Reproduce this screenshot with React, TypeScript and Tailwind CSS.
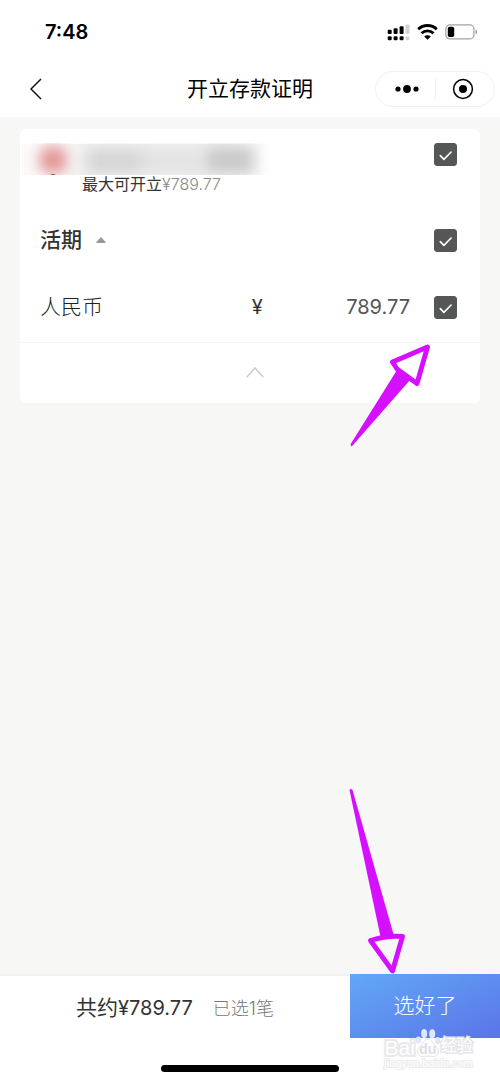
import { useState } from 'react';

function Check({ label, checked, onChange }: { label: string; checked: boolean; onChange: () => void }) {
  return (
    <label className="grid size-[23px] shrink-0 place-items-center">
      <input
        type="checkbox"
        aria-label={label}
        checked={checked}
        onChange={onChange}
        className="peer size-[23px] appearance-none rounded-[3px] border border-[#555756] bg-white [grid-area:1/1] checked:bg-[#555756]"
      />
      <svg viewBox="0 0 23 23" className="pointer-events-none invisible size-[23px] [grid-area:1/1] peer-checked:visible" fill="none" stroke="white" strokeWidth="1.6" strokeLinecap="round" strokeLinejoin="round">
        <path d="M6.300 12.600l3.600 3.800 7.200-7.400" />
      </svg>
    </label>
  );
}

function StatusIcons() {
  return (
    <div className="flex items-center gap-[7px]">
      <svg width="23" height="17" viewBox="0 0 23 17" aria-hidden="true">
        <g fill="#000">
          <rect x="0.7" y="5.7" width="4" height="4.3" rx="1" />
          <rect x="6.6" y="4.3" width="4" height="5.7" rx="1" />
          <rect x="12.6" y="2.3" width="4" height="7.7" rx="1" />
          <rect x="0.7" y="12.3" width="4" height="4" rx="1.2" />
          <rect x="6.6" y="12.3" width="4" height="4" rx="1.2" />
          <rect x="12.6" y="12.3" width="4" height="4" rx="1.2" />
        </g>
        <g fill="#d2d2d2">
          <rect x="18.5" y="0.5" width="4" height="9.5" rx="1" />
          <rect x="18.5" y="12.3" width="4" height="4" rx="1.2" />
        </g>
      </svg>
      <svg width="21" height="16" viewBox="0 0 21 16" aria-hidden="true" fill="none" stroke="#000" strokeWidth="2.9">
        <path d="M1.200 5.300a13.400 13.400 0 0 1 18.600 0" />
        <path d="M4.500 9.300a8.600 8.600 0 0 1 12 0" />
        <path d="M10.500 15.800l-3.300-3.200a4.600 4.600 0 0 1 6.600 0z" fill="#000" stroke="none" />
      </svg>
      <svg width="33" height="16" viewBox="0 0 33 16" aria-hidden="true">
        <rect x="0.9" y="0.9" width="28" height="14" rx="4" fill="none" stroke="#a3a3a3" strokeWidth="1.2" />
        <rect x="2.8" y="2.8" width="6.4" height="10.3" rx="1.8" fill="#000" />
        <path d="M30.600 5.600c2 .8 2 4 0 4.800z" fill="#8f8f8f" />
      </svg>
    </div>
  );
}

function Watermark() {
  return (
    <div aria-hidden="true" className="pointer-events-none absolute top-[54px] right-[27px] flex flex-col items-center font-['Liberation_Sans','Noto_Sans_CJK_SC',sans-serif] leading-none">
      <div className="flex items-end">
        <span className="text-[21px] text-white [-webkit-text-stroke:4px_#e8e9eb] [paint-order:stroke]">Bai</span>
        <span className="grid place-items-center">
          <svg width="26" height="30" viewBox="0 0 26 30" className="[grid-area:1/1]" fill="#dfe8fb">
            <ellipse cx="9.200" cy="5.600" rx="3" ry="4.600" />
            <ellipse cx="17.200" cy="5.800" rx="3" ry="4.600" />
            <ellipse cx="3.400" cy="12" rx="2.800" ry="3.600" />
            <ellipse cx="22.600" cy="12.600" rx="2.800" ry="3.600" />
            <path d="M13 11c4 0 5.400 5 8.400 8 3.600 3.600 2 9.500-2.800 9.500-2 0-3.600-.5-5.600-.5s-3.600.5-5.600.5c-4.800 0-6.400-5.900-2.800-9.500 3-3 4.400-8 8.400-8z" fill="#fff" stroke="#e2e3e6" />
          </svg>
          <span className="pt-3 text-[14px] font-bold text-[#dcdee1] [grid-area:1/1]">du</span>
        </span>
        <span className="pb-1 text-[16px] text-white [-webkit-text-stroke:3px_#e6e7ea] [paint-order:stroke]">经验</span>
      </div>
      <span className="text-[11px] text-white [-webkit-text-stroke:2px_#ececee] [paint-order:stroke]">jingyan.baidu.com</span>
    </div>
  );
}

export default function App() {
  const [selected, setSelected] = useState(true);
  const [expanded, setExpanded] = useState(true);
  const toggle = () => setSelected(!selected);

  return (
    <div className="flex min-h-screen flex-col bg-[#f7f7f6] font-[Inter,'Noto_Sans_CJK_SC',sans-serif] text-[#333]">
      <header className="bg-white text-black">
        <div className="flex h-[60px] items-center justify-between pt-1 pr-[22px] pl-[45px]">
          <span className="text-[20px] font-semibold">7:48</span>
          <StatusIcons />
        </div>
        <div className="grid h-[57px] grid-cols-[1fr_auto_1fr] items-center px-[5px]">
          <button type="button" aria-label="返回" className="ml-[15px] flex size-8 items-center justify-center">
            <svg width="12" height="22" viewBox="0 0 12 22" fill="none" stroke="#111" strokeWidth="1.5">
              <path d="M11 1L1 11l10 10" />
            </svg>
          </button>
          <h1 className="text-[21px]">开立存款证明</h1>
          <div className="flex h-9 w-[120px] items-center justify-self-end rounded-full border border-[#f1f1f1] pr-1">
            <button type="button" aria-label="更多" className="flex flex-1 justify-center pl-1">
              <svg width="24" height="10" viewBox="0 0 24 10">
                <circle cx="3" cy="5" r="2.600" />
                <circle cx="12" cy="5" r="3.900" />
                <circle cx="21" cy="5" r="2.600" />
              </svg>
            </button>
            <span className="h-[22px] w-px bg-[#f0f0f0]" />
            <button type="button" aria-label="关闭" className="flex flex-1 justify-center">
              <svg width="22" height="22" viewBox="0 0 22 22">
                <circle cx="11" cy="11" r="9.400" fill="none" stroke="#000" strokeWidth="1.500" />
                <circle cx="11" cy="11" r="4" />
              </svg>
            </button>
          </div>
        </div>
      </header>

      <main className="flex-1 px-5 pt-3">
        <section className="relative rounded-md bg-white">
          <div className="flex h-[77px] items-start justify-between pt-[14px] pr-[23px] pl-[2px]">
            <div>
              <div className="h-8 w-[250px] overflow-hidden">
                <svg viewBox="0 0 250 32" className="h-8 w-[250px]" aria-hidden="true">
                  <defs>
                    <filter id="soft" x="-20%" y="-100%" width="140%" height="300%">
                      <feGaussianBlur stdDeviation="7" />
                    </filter>
                    <linearGradient id="haze">
                      <stop offset="0" stopColor="#f5efef" stopOpacity="0.3" />
                      <stop offset="0.3" stopColor="#efefef" />
                      <stop offset="0.85" stopColor="#efefef" />
                      <stop offset="1" stopColor="#fff" />
                    </linearGradient>
                  </defs>
                  <rect y="1" width="250" height="31" fill="url(#haze)" />
                  <g filter="url(#soft)">
                    <circle cx="31" cy="17" r="14" fill="#e39494" />
                    <rect x="64" y="6" width="56" height="24" fill="#d6d6d6" />
                    <rect x="120" y="6" width="60" height="24" fill="#e3e3e3" />
                    <rect x="184" y="4" width="48" height="26" fill="#cacaca" />
                  </g>
                  <path d="M28 31q3 2 6 0z" fill="#a34a50" />
                </svg>
              </div>
              <p className="pl-[60px] text-[16px] leading-[18px]">
                最大可开立<span className="font-light text-[#888]">¥789.77</span>
              </p>
            </div>
            <Check label="最大可开立" checked={selected} onChange={toggle} />
          </div>

          <div className="flex h-[68px] items-center justify-between pr-[23px] pl-5">
            <button type="button" className="flex items-center gap-[14px] text-[21px] font-medium" onClick={() => setExpanded(!expanded)}>
              活期
              <svg width="10" height="6" viewBox="0 0 10 6" fill="#999">
                <path d="M5 0l4.600 5q.4 1-.6 1H1q-1 0-.6-1z" />
              </svg>
            </button>
            <Check label="活期" checked={selected} onChange={toggle} />
          </div>

          {expanded && (
            <div className="grid h-[68px] grid-cols-[2fr_1fr_23px] items-center gap-x-6 pr-[23px] pb-[2px] pl-5 text-[20px]">
              <div className="flex items-center justify-between">
                <span className="text-[21px] font-light text-[#222]">人民币</span>
                <span className="pr-2">¥</span>
              </div>
              <span className="text-right text-[#555]">789.77</span>
              <Check label="人民币" checked={selected} onChange={toggle} />
            </div>
          )}

          <button type="button" aria-label="收起" className="flex h-[61px] w-full items-center justify-center border-t border-[#f6f6f6] pb-[2px] pl-[10px]" onClick={() => setExpanded(!expanded)}>
            <svg width="18" height="11" viewBox="0 0 18 11" fill="none" stroke="#ccc" strokeWidth="1.500">
              <path d="M.7 10.200L9 1l8.300 9.200" />
            </svg>
          </button>

          <svg width="82" height="104" viewBox="0 0 82 104" aria-hidden="true" className="pointer-events-none absolute top-[214px] right-[48px]">
            <path d="M1.500 103.500Q0 102 1 100.500L47 27l13 10L3 102z" fill="#d50fff" />
            <path d="M77.500 4L42.500 19 47 26l20 14.500z" fill="#fff" stroke="#d50fff" strokeWidth="4.900" strokeLinejoin="round" />
          </svg>
        </section>
      </main>

      <footer className="relative bg-white">
        <div className="grid grid-cols-[7fr_3fr]">
          <div className="flex items-center justify-center gap-5 border-t-2 border-[#f0f1f1] pt-[2px] text-[21px]">
            <span>
              共约<span className="text-[20px]">¥789.77</span>
            </span>
            <span className="text-[18px] font-light text-[#777]">已选1笔</span>
          </div>
          <button type="button" className="h-16 bg-linear-to-br from-[#62a8f5] to-[#5a74e8] text-[21px] font-light text-white">选好了</button>
        </div>
        <div className="flex h-11 items-end justify-center pb-[10px]">
          <span className="h-[7px] w-[178px] rounded-full bg-black" />
        </div>
        <Watermark />
        <svg width="60" height="190" viewBox="0 0 60 190" aria-hidden="true" className="pointer-events-none absolute right-[92px] bottom-[105px]">
          <path d="M1.500 3Q2.500 1 4.500 3L46 149l-13 3z" fill="#d50fff" />
          <path d="M22.500 153.500Q40 148 54.500 149.500L44.500 184z" fill="#f7f7f6" stroke="#d50fff" strokeWidth="4.900" strokeLinejoin="round" />
        </svg>
      </footer>
    </div>
  );
}
